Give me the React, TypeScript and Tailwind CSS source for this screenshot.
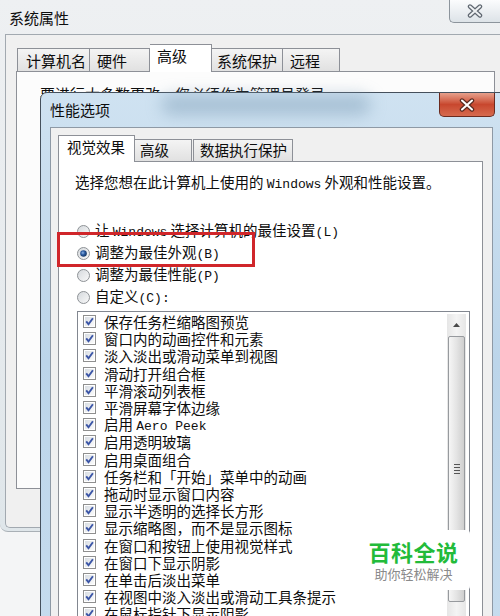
const items = [
  '保存任务栏缩略图预览',
  '窗口内的动画控件和元素',
  '淡入淡出或滑动菜单到视图',
  '滑动打开组合框',
  '平滑滚动列表框',
  '平滑屏幕字体边缘',
  '启用 |Aero Peek',
  '启用透明玻璃',
  '启用桌面组合',
  '任务栏和「开始」菜单中的动画',
  '拖动时显示窗口内容',
  '显示半透明的选择长方形',
  '显示缩略图，而不是显示图标',
  '在窗口和按钮上使用视觉样式',
  '在窗口下显示阴影',
  '在单击后淡出菜单',
  '在视图中淡入淡出或滑动工具条提示',
  '在鼠标指针下显示阴影',
];

const mono = "font-['Liberation_Mono',monospace] text-[13px]";

function CheckBox() {
  return (
    <svg width="13" height="13" viewBox="0 0 13 13" className="shrink-0">
      <defs>
        <linearGradient id="cbg" x1="0" y1="0" x2="1" y2="1">
          <stop offset="0" stopColor="#d8dde3" />
          <stop offset="1" stopColor="#fbfbfb" />
        </linearGradient>
      </defs>
      <rect x="0.5" y="0.5" width="12" height="12" fill="#fff" stroke="#8f8f8f" />
      <rect x="2" y="2" width="9" height="9" fill="url(#cbg)" />
      <path d="M3.2 6.4 L5.5 9.2 L9.9 3.2" fill="none" stroke="#3b55a6" strokeWidth="1.9" />
    </svg>
  );
}

function Radio({ on }: { on?: boolean }) {
  return (
    <svg width="13" height="13" viewBox="0 0 13 13" className="shrink-0">
      <defs>
        <linearGradient id="rbg" x1="0" y1="0" x2="1" y2="1">
          <stop offset="0" stopColor="#d4d8dc" />
          <stop offset="1" stopColor="#fafafa" />
        </linearGradient>
        <radialGradient id="rdot" cx="0.4" cy="0.4" r="0.6">
          <stop offset="0" stopColor="#8fb6e8" />
          <stop offset="0.5" stopColor="#2a5aa0" />
          <stop offset="1" stopColor="#173866" />
        </radialGradient>
      </defs>
      <circle cx="6.5" cy="6.5" r="6" fill="url(#rbg)" stroke="#8e9296" />
      {on && <circle cx="6.5" cy="6.5" r="3.3" fill="url(#rdot)" />}
    </svg>
  );
}

function CloseX({ light }: { light?: boolean }) {
  return (
    <svg width="20" height="14" viewBox="0 0 20 14">
      <path d="M5 2.5 L15 11.5 M15 2.5 L5 11.5" stroke={light ? '#5a2a20' : '#5f6770'} strokeWidth="4.4" strokeLinecap="round" />
      <path d="M5 2.5 L15 11.5 M15 2.5 L5 11.5" stroke={light ? '#ffffff' : '#eef1f3'} strokeWidth="2" strokeLinecap="round" />
    </svg>
  );
}

export default function App() {
  return (
    <div className="relative w-[500px] h-[616px] overflow-hidden bg-[#f4f5f6] font-['Noto_Sans_CJK_SC',sans-serif] text-[#0d0d0d]">
      {/* Outer window: 系统属性 */}
      <div className="h-[532px] rounded-bl-[8px] bg-gradient-to-b from-[#eef0f2] via-[#e7ebee] to-[#dfe6ea] border-b border-[#a9b0b6]">
        <div className="h-[34px] pl-[9px] flex items-center text-[15px] leading-none">系统属性</div>
        <div className="ml-[5px] h-[494px] rounded-bl-[5px] border-l border-t border-b border-[#a2a9b0] bg-[#f0f0f0] pl-[10px] pt-[9px]">
          <div className="flex items-end h-[27px] ml-[1px] text-[15px] leading-none">
            <div className="w-[73px] h-[23px] pl-[8px] pt-[4px] border border-b-0 border-[#8d9097] bg-gradient-to-b from-[#f4f4f4] to-[#e1e1e1]">计算机名</div>
            <div className="w-[60px] h-[23px] pl-[7px] pt-[4px] border border-b-0 border-l-0 border-[#8d9097] bg-gradient-to-b from-[#f4f4f4] to-[#e1e1e1]">硬件</div>
            <div className="relative z-10 w-[62px] h-[28px] -mb-[1px] pl-[7px] pt-[3px] border border-b-0 border-l-0 border-[#8d9097] bg-white">高级</div>
            <div className="w-[71px] h-[23px] pl-[5px] pt-[4px] border border-b-0 border-l-0 border-[#8d9097] bg-gradient-to-b from-[#f4f4f4] to-[#e1e1e1]">系统保护</div>
            <div className="w-[57px] h-[23px] pl-[7px] pt-[4px] border border-b-0 border-l-0 border-[#8d9097] bg-gradient-to-b from-[#f4f4f4] to-[#e1e1e1]">远程</div>
          </div>
          <div className="w-[479px] h-[418px] border border-[#8d9097] bg-[#fcfcfc] pl-[23px] pt-[13px] text-[15px] leading-[17px]">
            要进行大多数更改，您必须作为管理员登录。
          </div>
        </div>
      </div>

      {/* outer close button */}
      <div className="absolute top-0 right-0 w-[51px] h-[23px] rounded-bl-[5px] border border-t-0 border-r-0 border-[#8c949c] bg-gradient-to-b from-[#fbfcfd] to-[#dde3e8] flex items-center justify-center">
        <CloseX />
      </div>

      {/* Inner dialog: 性能选项 */}
      <div className="absolute left-[40px] top-[92px] w-[472px] h-[540px] rounded-tl-[7px] border border-[#45505c] bg-gradient-to-b from-[#cfe2f1] via-[#bcd5ea] to-[#c6dcee] pl-[9px] pt-[34px]">
        <div className="absolute left-[120px] top-[2px] w-[210px] h-[20px] rounded-full bg-[#7f9fb8] opacity-50 blur-[8px]"></div>
        <div className="absolute left-[9px] top-[9px] text-[15px] leading-none">性能选项</div>
        <div className="absolute right-[16px] top-0 w-[56px] h-[24px] rounded-b-[5px] border border-t-0 border-[#6b2a1e] bg-gradient-to-b from-[#e6a08c] via-[#c8472e] to-[#d66a4e] flex items-center justify-center">
          <CloseX light />
        </div>

        <div className="relative w-[443px] h-[520px] border border-[#8e99a5] bg-[#f0f0f0] pl-[7px] pt-[7px]">
          <div className="flex items-end h-[26px] text-[14.5px] leading-none">
            <div className="relative z-10 w-[77px] h-[27px] -mb-[1px] pl-[8px] pt-[4px] border border-b-0 border-[#8d9097] bg-white">视觉效果</div>
            <div className="w-[57px] h-[22px] pl-[5px] pt-[3px] border border-b-0 border-l-0 border-[#8d9097] bg-gradient-to-b from-[#f4f4f4] to-[#e1e1e1]">高级</div>
            <div className="w-[100px] h-[22px] ml-[1px] pl-[6px] pt-[3px] border border-b-0 border-[#8d9097] bg-gradient-to-b from-[#f4f4f4] to-[#e1e1e1]">数据执行保护</div>
          </div>
          <div className="w-[425px] h-[480px] border border-[#8d9097] bg-white pt-[11px] text-[14.5px] leading-[17px]">
            <div className="pl-[16px]">
              选择您想在此计算机上使用的 <span className={mono}>Windows</span> 外观和性能设置。
            </div>
            <div className="mt-[27px] pl-[18px]">
              <div className="h-[22px] flex items-center gap-[5px]">
                <Radio />
                <span>让 <span className={mono}>Windows</span> 选择计算机的最佳设置<span className={mono}>(L)</span></span>
              </div>
              <div className="h-[22px] flex items-center gap-[5px]">
                <Radio on />
                <span>调整为最佳外观<span className={mono}>(B)</span></span>
              </div>
              <div className="h-[22px] flex items-center gap-[5px]">
                <Radio />
                <span>调整为最佳性能<span className={mono}>(P)</span></span>
              </div>
              <div className="h-[22px] flex items-center gap-[5px]">
                <Radio />
                <span>自定义<span className={mono}>(C):</span></span>
              </div>
            </div>

            {/* list box */}
            <div className="ml-[18px] mt-[3px] w-[393px] h-[330px] border border-[#828790] flex">
              <div className="flex-1 pt-[1px] pl-[5px]">
                {items.map((it, i) => {
                  const [a, b] = it.split('|');
                  return (
                    <div key={i} className="h-[17.2px] flex items-center gap-[8px] whitespace-nowrap">
                      <CheckBox />
                      <span>
                        {a}
                        {b && <span className={mono}>{b}</span>}
                      </span>
                    </div>
                  );
                })}
              </div>
              <div className="w-[19px] mr-[3px] mt-[2px] bg-gradient-to-r from-[#e6e6e6] via-[#f4f4f4] to-[#e6e6e6] flex flex-col items-center">
                <div className="h-[22px] flex items-center justify-center">
                  <svg width="7" height="4" viewBox="0 0 7 4">
                    <path d="M0 4 L3.5 0 L7 4 Z" fill="#4a4a4a" />
                  </svg>
                </div>
                <div className="w-[17px] h-[266px] rounded-[2px] border border-[#979a9e] bg-gradient-to-r from-[#f6f6f6] via-[#e4e4e4] to-[#cfcfcf] flex items-center justify-center">
                  <div className="flex flex-col gap-[2px]">
                    <div className="w-[6px] h-px bg-[#555]"></div>
                    <div className="w-[6px] h-px bg-[#555]"></div>
                    <div className="w-[6px] h-px bg-[#555]"></div>
                    <div className="w-[6px] h-px bg-[#555]"></div>
                  </div>
                </div>
              </div>
            </div>
          </div>
        </div>
      </div>

      {/* red highlight box */}
      <div className="absolute left-[57px] top-[232px] w-[198px] h-[35px] border-[3px] border-[#d0262a]"></div>

      {/* watermark */}
      <div className="absolute left-[357px] top-[530px] w-[113px] h-[60px] rounded-[4px] bg-white flex flex-col items-center justify-center">
        <div className="text-[22px] leading-[26px] font-bold text-[#22bb3a] tracking-[0.5px]">百科全说</div>
        <div className="text-[13px] leading-[16px] text-[#8a8a8a] mt-[2px]">助你轻松解决</div>
      </div>
    </div>
  );
}
